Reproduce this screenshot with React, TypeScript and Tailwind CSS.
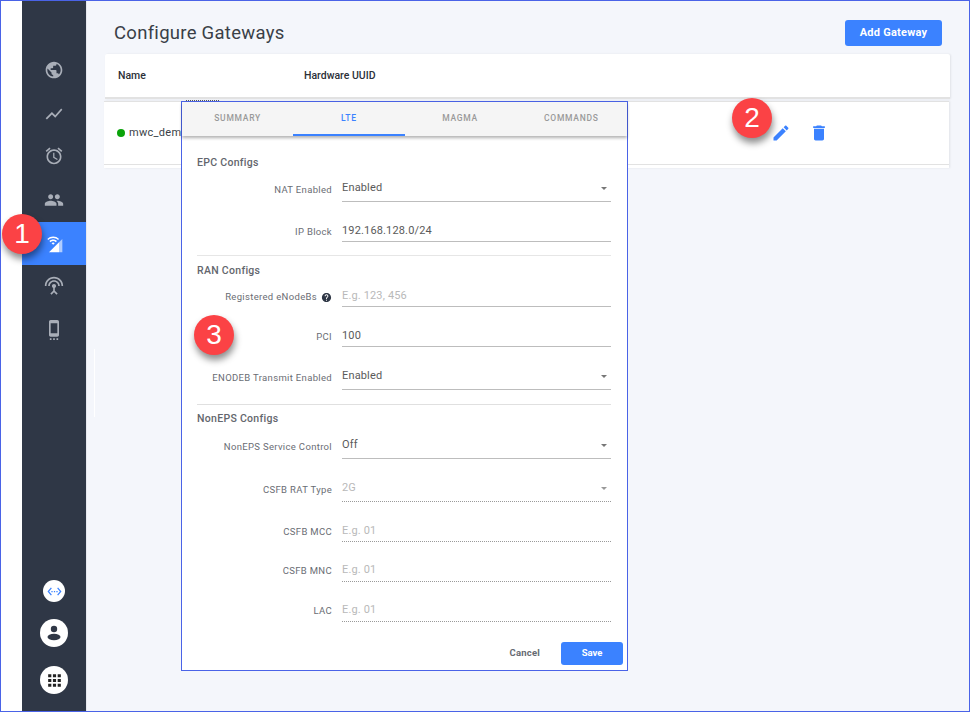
import React from "react";

const Icon = ({ d, className }: { d: string; className: string }) => (
  <svg viewBox="0 0 24 24" className={className} fill="currentColor">
    <path d={d} />
  </svg>
);

const P = {
  public: "M12 2C6.48 2 2 6.48 2 12s4.48 10 10 10 10-4.48 10-10S17.52 2 12 2zm-1 17.93c-3.95-.49-7-3.85-7-7.93 0-.62.08-1.21.21-1.79L9 15v1c0 1.1.9 2 2 2v1.93zm6.9-2.54c-.26-.81-1-1.39-1.9-1.39h-1v-3c0-.55-.45-1-1-1H8v-2h2c.55 0 1-.45 1-1V7h2c1.1 0 2-.9 2-2v-.41c2.93 1.19 5 4.06 5 7.41 0 2.08-.8 3.97-2.1 5.39z",
  chart: "M3.5 18.49l6-6.01 4 4L22 6.92l-1.41-1.41-7.09 7.97-4-4L2 16.99z",
  alarm: "M22 5.72l-4.6-3.86-1.29 1.53 4.6 3.86L22 5.72zM7.88 3.39L6.6 1.86 2 5.71l1.29 1.53 4.59-3.85zM12.5 8H11v6l4.75 2.85.75-1.23-4-2.37V8zM12 4c-4.97 0-9 4.03-9 9s4.02 9 9 9c4.97 0 9-4.03 9-9s-4.03-9-9-9zm0 16c-3.87 0-7-3.13-7-7s3.13-7 7-7 7 3.13 7 7-3.13 7-7 7z",
  people: "M16 11c1.66 0 2.99-1.34 2.99-3S17.66 5 16 5c-1.66 0-3 1.34-3 3s1.34 3 3 3zm-8 0c1.66 0 2.99-1.34 2.99-3S9.66 5 8 5C6.34 5 5 6.34 5 8s1.34 3 3 3zm0 2c-2.33 0-7 1.17-7 3.5V19h14v-2.5c0-2.33-4.67-3.5-7-3.5zm8 0c-.29 0-.62.02-.97.05 1.16.84 1.97 1.97 1.97 3.45V19h6v-2.5c0-2.33-4.67-3.5-7-3.5z",
  antenna: "M12 5c-3.87 0-7 3.13-7 7h2c0-2.76 2.24-5 5-5s5 2.24 5 5h2c0-3.87-3.13-7-7-7zm1 9.29c.88-.39 1.5-1.26 1.5-2.29 0-1.38-1.12-2.5-2.5-2.5S9.5 10.62 9.5 12c0 1.02.62 1.9 1.5 2.29v3.3L7.59 21 9 22.41l3-3 3 3L16.41 21 13 17.59v-3.3zM12 1C5.93 1 1 5.93 1 12h2c0-4.97 4.03-9 9-9s9 4.03 9 9h2c0-6.07-4.93-11-11-11z",
  cell: "M7 24h2v-2H7v2zm4 0h2v-2h-2v2zm4 0h2v-2h-2v2zM16 .01L8 0C6.9 0 6 .9 6 2v16c0 1.1.9 2 2 2h8c1.1 0 2-.9 2-2V2c0-1.1-.9-1.99-2-1.99zM16 16H8V4h8v12z",
  edit: "M3 17.25V21h3.75L17.81 9.94l-3.75-3.75L3 17.25zM20.71 7.04c.39-.39.39-1.02 0-1.41l-2.34-2.34c-.39-.39-1.02-.39-1.41 0l-1.83 1.83 3.75 3.75 1.83-1.83z",
  del: "M6 19c0 1.1.9 2 2 2h8c1.1 0 2-.9 2-2V7H6v12zM19 4h-3.5l-1-1h-5l-1 1H5v2h14V4z",
  help: "M12 2C6.48 2 2 6.48 2 12s4.48 10 10 10 10-4.48 10-10S17.52 2 12 2zm1 17h-2v-2h2v2zm2.07-7.75l-.9.92C13.45 12.9 13 13.5 13 15h-2v-.5c0-1.1.45-2.1 1.17-2.83l1.24-1.26c.37-.36.59-.86.59-1.41 0-1.1-.9-2-2-2s-2 .9-2 2H8c0-2.21 1.79-4 4-4s4 1.79 4 4c0 .88-.36 1.68-.93 2.25z",
  apps: "M4 8h4V4H4v4zm6 12h4v-4h-4v4zm-6 0h4v-4H4v4zm0-6h4v-4H4v4zm6 0h4v-4h-4v4zm6-10v4h4V4h-4zm-6 4h4V4h-4v4zm6 6h4v-4h-4v4zm0 6h4v-4h-4v4z",
  ethernet: "M7.77 6.76L6.23 5.48.82 12l5.41 6.52 1.54-1.28L3.42 12l4.35-5.24zM7 13h2v-2H7v2zm10-2h-2v2h2v-2zm-6 2h2v-2h-2v2zm6.77-7.52l-1.54 1.28L20.58 12l-4.35 5.24 1.54 1.28L23.18 12l-5.41-6.52z",
};

const Badge = ({ n, className }: { n: string; className: string }) => (
  <div
    className={`absolute z-20 flex h-10 w-10 items-center justify-center rounded-full bg-[#fb4245] font-['Liberation_Sans'] text-[28px] leading-none text-white shadow-[1px_5px_7px_rgba(0,0,0,0.45)] ${className}`}
  >
    {n}
  </div>
);

const SideIcon = ({ d, className }: { d: string; className: string }) => (
  <div className={`flex items-center justify-center text-[#a9aeb8] ${className}`}>
    <Icon d={d} className="h-[20px] w-[20px]" />
  </div>
);

type FieldProps = {
  label: string;
  value: string;
  box: string;
  select?: boolean;
  placeholder?: boolean;
  disabled?: boolean;
  help?: boolean;
};

const Field = ({ label, value, box, select, placeholder, disabled, help }: FieldProps) => (
  <div className={`flex ${box}`}>
    <div className="flex w-[135px] shrink-0 items-center justify-end gap-1 text-[9.5px] tracking-[0.33px] text-[#6a6d74]">
      {label}
      {help && <Icon d={P.help} className="h-[11px] w-[11px] text-[#2f3746]" />}
    </div>
    <div
      className={`relative ml-[10px] flex flex-1 items-start border-b ${disabled ? "border-dotted border-[#9a9a9a]" : "border-[#bdbdbd]"} ${select ? "pt-[2px]" : "pt-[1px]"}`}
    >
      <span className={`text-[11px] leading-[16px] tracking-[0.15px] ${placeholder || disabled ? "text-[#b9b9b9]" : "text-[#5a5a5a]"}`}>
        {value}
      </span>
      {select && (
        <span className={`absolute right-[4px] top-[9px] h-0 w-0 border-x-[3.5px] border-t-[3.5px] border-x-transparent ${disabled ? "border-t-[#999]" : "border-t-[#777]"}`} />
      )}
    </div>
  </div>
);

const Heading = ({ children, className }: { children: string; className: string }) => (
  <div className={`h-4 text-[10.5px] font-medium leading-4 tracking-[0.3px] text-[#63666d] ${className}`}>{children}</div>
);

const Tab = ({ label, active }: { label: string; active?: boolean }) => (
  <div
    className={`flex h-[34px] flex-1 items-center justify-center border-b-2 text-[8.5px] font-medium tracking-[0.75px] ${active ? "border-[#3b82ff] font-bold text-[#3b82ff]" : "border-transparent text-[#9a9a9a]"}`}
  >
    {label}
  </div>
);

export default function App() {
  return (
    <div className="relative flex h-[712px] w-[970px] overflow-hidden border border-[#4a63e7] bg-white font-['Roboto',sans-serif]">
      <div className="w-[21px] shrink-0 bg-white" />
      <aside className="flex w-[64px] shrink-0 flex-col items-stretch bg-[#2f3746]">
        <SideIcon d={P.public} className="mt-[47px] h-[43px]" />
        <SideIcon d={P.chart} className="mt-[1px] h-[43px]" />
        <SideIcon d={P.alarm} className="h-[42px]" />
        <SideIcon d={P.people} className="mt-[1px] h-[43px]" />
        <div className="mt-[1px] flex h-[43px] items-center justify-center bg-[#3b82ff] text-white">
          <svg viewBox="0 0 24 24" className="h-[20px] w-[20px]" fill="currentColor">
            <path d="M18 9.98L6 22h12z" />
            <path d="M18 9.98V22h4V5.97z" opacity="0.6" />
            <path d="M5.22 7.22L3.93 5.93c3.9-3.91 10.24-3.91 14.15 0l-1.29 1.29c-3.19-3.19-8.38-3.19-11.57 0zm7.71 3.85L11 13l-1.93-1.93c1.07-1.06 2.79-1.06 3.86 0zm1.29-1.28c-1.78-1.77-4.66-1.77-6.43 0L6.5 8.5c2.48-2.48 6.52-2.48 9 0l-1.28 1.29z" />
          </svg>
        </div>
        <SideIcon d={P.antenna} className="h-[42px]" />
        <SideIcon d={P.cell} className="mt-[1px] h-[43px]" />
        <div className="mt-auto flex flex-col items-center pb-[17px]">
          <div className="flex h-[22px] w-[22px] items-center justify-center rounded-full bg-white text-[#3b82ff]">
            <Icon d={P.ethernet} className="h-[15px] w-[15px]" />
          </div>
          <div className="mt-[17px] flex h-[28px] w-[28px] items-center justify-center rounded-full bg-white">
            <svg viewBox="0 0 28 28" className="h-[28px] w-[28px]" fill="#2f3746">
              <circle cx="14" cy="10" r="3.2" />
              <ellipse cx="14" cy="18" rx="6.5" ry="3.2" />
            </svg>
          </div>
          <div className="mt-[19px] flex h-[28px] w-[28px] items-center justify-center rounded-full bg-white text-[#222]">
            <Icon d={P.apps} className="h-[19px] w-[19px]" />
          </div>
        </div>
      </aside>

      <main className="flex-1 border-l border-[#e6e8ee] bg-[#f4f6fb]">
        <div className="flex h-[53px] items-start justify-between pl-[27px] pr-[27px]">
          <h1 className="mt-[19px] text-[18.5px] leading-[26px] tracking-[0.28px] text-[#3a3f47]">Configure Gateways</h1>
          <button className="mt-[19px] h-[26px] w-[97px] rounded-[3px] bg-[#3b82ff] text-[11px] font-bold tracking-[0.25px] text-white">
            Add Gateway
          </button>
        </div>
        <div className="ml-[18px] mr-[19px] flex h-[45px] items-center rounded-t-[2px] border-b-2 border-[#e2e2e2] bg-white pl-[13px] text-[10.5px] font-medium text-[#2c3038] shadow-[1px_0_2px_rgba(0,0,0,0.08)]">
          <span className="w-[186px]">Name</span>
          <span>Hardware UUID</span>
        </div>
        <div className="ml-[17px] mr-[20px] mt-[2px] bg-white pb-[3px] shadow-[1px_0_2px_rgba(0,0,0,0.08)]">
          <div className="flex h-[64px] items-center border-y border-[#e2e2e2] pl-[13px] text-[11px] tracking-[0.3px] text-[#3a3f47]">
            <span className="h-2 w-2 rounded-full bg-[#0aa30a]" />
            <span className="ml-1">mwc_demo</span>
            <div className="ml-auto mr-[120px] flex items-center gap-[18px] text-[#3b82ff]">
              <Icon d={P.edit} className="h-[20px] w-[20px]" />
              <Icon d={P.del} className="h-[20px] w-[20px]" />
            </div>
          </div>
        </div>
      </main>

      {/* Faint capture artefacts lying over the page */}
      <div className="absolute left-[93px] top-[348px] h-[68px] w-px bg-white" />
      <div className="absolute left-[185px] top-[99px] z-10 h-px w-[33px] border-t border-dotted border-[#555]" />

      {/* Modal */}
      <div className="absolute left-[180px] top-[100px] z-10 h-[570px] w-[447px] border border-[#4a63e7] bg-white">
        <div className="flex h-[34px] bg-[#f5f5f5] shadow-[0_2px_3px_rgba(0,0,0,0.3)]">
          <Tab label="SUMMARY" />
          <Tab label="LTE" active />
          <Tab label="MAGMA" />
          <Tab label="COMMANDS" />
        </div>
        <div className="px-[15px]">
          <div className="w-[414px]">
            <Heading className="mt-[19px]">EPC Configs</Heading>
            <Field label="NAT Enabled" value="Enabled" select box="mt-[7px] h-[24px]" />
            <Field label="IP Block" value="192.168.128.0/24" box="mt-[20px] h-[20px]" />
            <div className="mt-[13px] h-px bg-[#e6e6e6]" />
            <Heading className="mt-[7px]">RAN Configs</Heading>
            <Field label="Registered eNodeBs" value="E.g. 123, 456" placeholder help box="mt-[8px] h-[20px]" />
            <Field label="PCI" value="100" box="mt-[20px] h-[20px]" />
            <Field label="ENODEB Transmit Enabled" value="Enabled" select box="mt-[19px] h-[24px]" />
            <div className="mt-[14px] h-px bg-[#e0e0e0]" />
            <Heading className="mt-[6px]">NonEPS Configs</Heading>
            <Field label="NonEPS Service Control" value="Off" select box="mt-[8px] h-[24px]" />
            <Field label="CSFB RAT Type" value="2G" select disabled box="mt-[19px] h-[24px]" />
            <Field label="CSFB MCC" value="E.g. 01" disabled box="mt-[20px] h-[20px]" />
            <Field label="CSFB MNC" value="E.g. 01" disabled box="mt-[19px] h-[21px]" />
            <Field label="LAC" value="E.g. 01" disabled box="mt-[19px] h-[21px]" />
          </div>
          <div className="mt-[20px] flex items-center justify-end">
            <span className="text-[9.5px] font-bold tracking-[0.2px] text-[#666a72]">Cancel</span>
            <button className="ml-[21px] mr-[-11px] h-[23px] w-[62px] rounded-[3px] bg-[#3b82ff] text-[9.5px] font-bold text-white">
              Save
            </button>
          </div>
        </div>
      </div>

      <Badge n="1" className="left-[1px] top-[213px]" />
      <Badge n="2" className="left-[731px] top-[97px]" />
      <Badge n="3" className="left-[193px] top-[314px]" />
    </div>
  );
}
